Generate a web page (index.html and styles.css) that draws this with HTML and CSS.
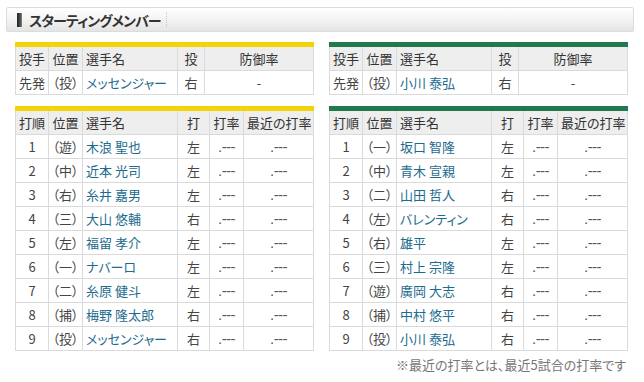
FILE: index.html
```html
<!DOCTYPE html>
<html lang="ja">
<head>
<meta charset="utf-8">
<link rel="stylesheet" href="styles.css">
</head>
<body>
<div class="page">
  <div class="heading">
    <span class="mark"></span>
    <h2 class="title">スターティングメンバー</h2>
    <span class="sep"></span>
  </div>
  <div class="teams">
    <div class="team team-home">
      <table class="tbl pitch">
        <colgroup><col class="c1"><col class="c2"><col class="c3"><col class="c4p"><col></colgroup>
        <tr class="hd"><td class="ctr">投手</td><td class="ctr">位置</td><td>選手名</td><td class="ctr">投</td><td class="ctr">防御率</td></tr>
        <tr><td class="ctr">先発</td><td class="ctr">（投）</td><td><span class="nm">メッセンジャー</span></td><td class="ctr">右</td><td class="ctr">-</td></tr>
      </table>
      <table class="tbl bat">
        <colgroup><col class="c1"><col class="c2"><col class="c3"><col class="c4"><col class="c5"><col></colgroup>
        <tr class="hd"><td class="ctr">打順</td><td class="ctr">位置</td><td>選手名</td><td class="ctr">打</td><td class="ctr">打率</td><td class="ctr">最近の打率</td></tr>
        <tr><td class="ctr">1</td><td class="ctr">（遊）</td><td><span class="nm">木浪 聖也</span></td><td class="ctr">左</td><td class="ctr avg">.---</td><td class="ctr avg">.---</td></tr>
        <tr><td class="ctr">2</td><td class="ctr">（中）</td><td><span class="nm">近本 光司</span></td><td class="ctr">左</td><td class="ctr avg">.---</td><td class="ctr avg">.---</td></tr>
        <tr><td class="ctr">3</td><td class="ctr">（右）</td><td><span class="nm">糸井 嘉男</span></td><td class="ctr">左</td><td class="ctr avg">.---</td><td class="ctr avg">.---</td></tr>
        <tr><td class="ctr">4</td><td class="ctr">（三）</td><td><span class="nm">大山 悠輔</span></td><td class="ctr">右</td><td class="ctr avg">.---</td><td class="ctr avg">.---</td></tr>
        <tr><td class="ctr">5</td><td class="ctr">（左）</td><td><span class="nm">福留 孝介</span></td><td class="ctr">左</td><td class="ctr avg">.---</td><td class="ctr avg">.---</td></tr>
        <tr><td class="ctr">6</td><td class="ctr">（一）</td><td><span class="nm">ナバーロ</span></td><td class="ctr">左</td><td class="ctr avg">.---</td><td class="ctr avg">.---</td></tr>
        <tr><td class="ctr">7</td><td class="ctr">（二）</td><td><span class="nm">糸原 健斗</span></td><td class="ctr">左</td><td class="ctr avg">.---</td><td class="ctr avg">.---</td></tr>
        <tr><td class="ctr">8</td><td class="ctr">（捕）</td><td><span class="nm">梅野 隆太郎</span></td><td class="ctr">右</td><td class="ctr avg">.---</td><td class="ctr avg">.---</td></tr>
        <tr><td class="ctr">9</td><td class="ctr">（投）</td><td><span class="nm">メッセンジャー</span></td><td class="ctr">右</td><td class="ctr avg">.---</td><td class="ctr avg">.---</td></tr>
      </table>
    </div>
    <div class="team team-away">
      <table class="tbl pitch">
        <colgroup><col class="c1"><col class="c2"><col class="c3"><col class="c4p"><col></colgroup>
        <tr class="hd"><td class="ctr">投手</td><td class="ctr">位置</td><td>選手名</td><td class="ctr">投</td><td class="ctr">防御率</td></tr>
        <tr><td class="ctr">先発</td><td class="ctr">（投）</td><td><span class="nm">小川 泰弘</span></td><td class="ctr">右</td><td class="ctr">-</td></tr>
      </table>
      <table class="tbl bat">
        <colgroup><col class="c1"><col class="c2"><col class="c3"><col class="c4"><col class="c5"><col></colgroup>
        <tr class="hd"><td class="ctr">打順</td><td class="ctr">位置</td><td>選手名</td><td class="ctr">打</td><td class="ctr">打率</td><td class="ctr">最近の打率</td></tr>
        <tr><td class="ctr">1</td><td class="ctr">（一）</td><td><span class="nm">坂口 智隆</span></td><td class="ctr">左</td><td class="ctr avg">.---</td><td class="ctr avg">.---</td></tr>
        <tr><td class="ctr">2</td><td class="ctr">（中）</td><td><span class="nm">青木 宣親</span></td><td class="ctr">左</td><td class="ctr avg">.---</td><td class="ctr avg">.---</td></tr>
        <tr><td class="ctr">3</td><td class="ctr">（二）</td><td><span class="nm">山田 哲人</span></td><td class="ctr">右</td><td class="ctr avg">.---</td><td class="ctr avg">.---</td></tr>
        <tr><td class="ctr">4</td><td class="ctr">（左）</td><td><span class="nm">バレンティン</span></td><td class="ctr">右</td><td class="ctr avg">.---</td><td class="ctr avg">.---</td></tr>
        <tr><td class="ctr">5</td><td class="ctr">（右）</td><td><span class="nm">雄平</span></td><td class="ctr">左</td><td class="ctr avg">.---</td><td class="ctr avg">.---</td></tr>
        <tr><td class="ctr">6</td><td class="ctr">（三）</td><td><span class="nm">村上 宗隆</span></td><td class="ctr">左</td><td class="ctr avg">.---</td><td class="ctr avg">.---</td></tr>
        <tr><td class="ctr">7</td><td class="ctr">（遊）</td><td><span class="nm">廣岡 大志</span></td><td class="ctr">右</td><td class="ctr avg">.---</td><td class="ctr avg">.---</td></tr>
        <tr><td class="ctr">8</td><td class="ctr">（捕）</td><td><span class="nm">中村 悠平</span></td><td class="ctr">右</td><td class="ctr avg">.---</td><td class="ctr avg">.---</td></tr>
        <tr><td class="ctr">9</td><td class="ctr">（投）</td><td><span class="nm">小川 泰弘</span></td><td class="ctr">右</td><td class="ctr avg">.---</td><td class="ctr avg">.---</td></tr>
      </table>
      <p class="note">※最近の打率とは、最近5試合の打率です</p>
    </div>
  </div>
</div>
</body>
</html>
```

FILE: styles.css
```css
html, body {
  margin: 0;
  padding: 0;
  background: #ffffff;
}
body {
  font-family: "Noto Sans CJK JP", "Noto Sans", sans-serif;
  font-feature-settings: "palt";
  font-size: 13px;
  color: #444;
}
.page {
  padding: 7px 10px 0 6px;
}
.heading {
  display: flex;
  align-items: center;
  height: 23px;
  border: 1px solid #dcdcdc;
  border-radius: 2px;
  background: linear-gradient(to bottom, #ffffff 0%, #f6f6f6 40%, #e4e4e4 100%);
  padding-left: 10px;
}
.mark {
  width: 5px;
  height: 14px;
  background: linear-gradient(to right, #1e1e1e, #555 70%, #888);
}
.title {
  margin: 0 0 0 7px;
  font-size: 14px;
  font-weight: 700;
  color: #333;
  letter-spacing: -0.9px;
}
.sep {
  margin-left: 5px;
  width: 0;
  height: 15px;
  border-left: 1px dotted #c8c8c8;
}
.teams {
  display: grid;
  grid-template-columns: 299px 299px;
  column-gap: 15px;
  margin: 10px 0 0 9px;
}
.tbl {
  width: 100%;
  border-collapse: collapse;
  table-layout: fixed;
  border-top: 5px solid #f3d40b;
}
.team-away .tbl {
  border-top-color: #217a4f;
}
.pitch {
  margin-bottom: 11px;
}
.tbl td {
  height: 23px;
  padding: 0 3px;
  border: 1px solid #dadada;
  border-top: 0;
  line-height: 23px;
  white-space: nowrap;
  overflow: hidden;
}
.tbl tr + tr td {
  border-top: 1px solid #dadada;
}
.hd td {
  background: #eeeeee;
  color: #333;
}
.ctr {
  text-align: center;
}
.c1 { width: 33px; }
.c2 { width: 34px; }
.c3 { width: 95px; }
.c4 { width: 32px; }
.c4p { width: 27px; }
.c5 { width: 34px; }
.nm {
  color: #1d6b8e;
}
.avg {
  color: #555;
  font-family: "Liberation Sans", sans-serif;
  font-size: 15px;
  letter-spacing: -0.6px;
}
.note {
  margin: 4px 2px 0 0;
  text-align: right;
  color: #777;
  font-size: 13px;
}
```
